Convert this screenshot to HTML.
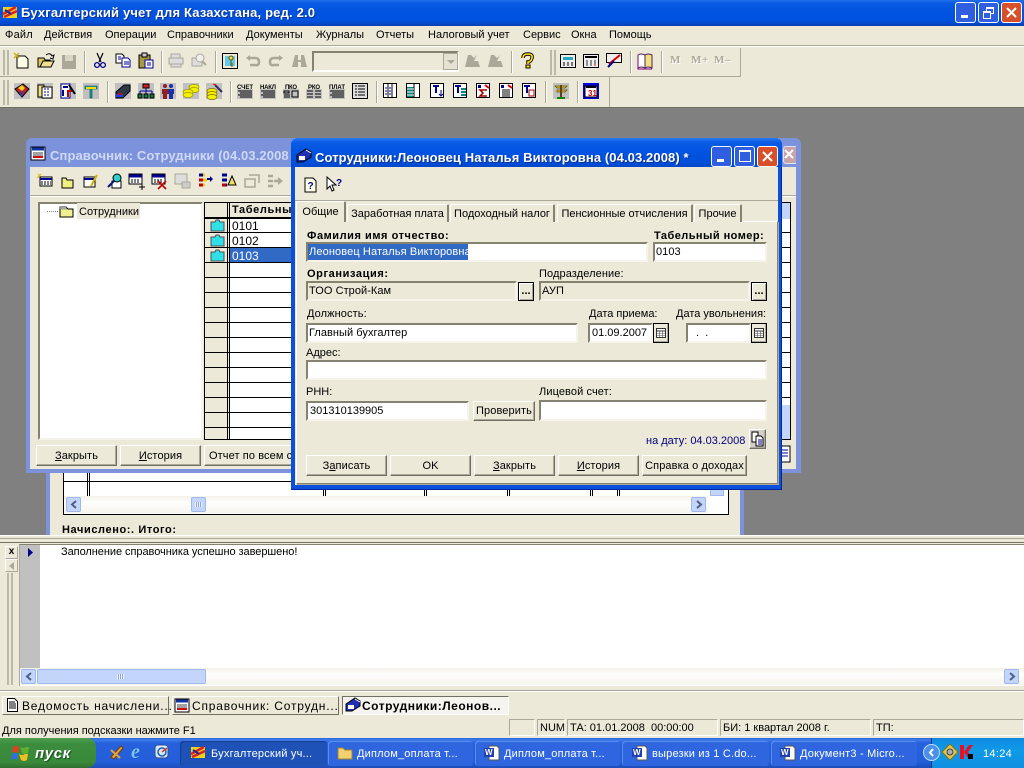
<!DOCTYPE html>
<html><head><meta charset="utf-8"><title>Бухгалтерский учет</title>
<style>
html,body{margin:0;padding:0;width:1024px;height:768px;overflow:hidden;background:#ece9d8}
body{position:relative;font:11px "Liberation Sans",sans-serif;color:#000}
div,span,svg{position:absolute;box-sizing:border-box;white-space:nowrap}
svg{overflow:visible}
.t{line-height:14px;height:14px}
.b{font-weight:bold;letter-spacing:.6px}
.inp{background:#fff;border:2px solid;border-color:#85826f #f5f3ea #f5f3ea #85826f;line-height:17px;padding-left:1px;font-size:11px;letter-spacing:.05px}
.dis{background:#ece9d8}
.btn{background:#ece9d8;border:1px solid;border-color:#fff #716f64 #716f64 #fff;box-shadow:inset -1px -1px 0 #aca899;text-align:center;line-height:20px;font-size:11px;letter-spacing:.1px}
.dots{background:#ece9d8;border:1px solid #000;box-shadow:inset 1px 1px 0 #fff,inset -1px -1px 0 #aca899;text-align:center;font-weight:bold;line-height:16px;font-size:11px}
.sep{width:2px;background:#aca899;border-right:1px solid #fff}
.tab{background:#ece9d8;border:1px solid #aca899;border-bottom:none;border-top-color:#fff;border-left-color:#fff;border-right:2px solid #85826f;text-align:center;line-height:20px;font-size:11px;border-radius:2px 2px 0 0}
.tb{background:#2f66e0;border-radius:3px;color:#fff;line-height:26px;padding-left:29px;font-size:11px;letter-spacing:.2px;top:741px;height:25px;box-shadow:inset 1px 1px 0 #5a8cf0}
.st{top:719px;height:17px;border:1px solid;border-color:#aca899 #fff #fff #aca899;line-height:16px;padding-left:2px;font-size:11px;letter-spacing:0}
.mdi{top:696px;height:19px;border:1px solid;border-color:#fff #716f64 #716f64 #fff;background:#ece9d8;line-height:19px;font-size:12px;letter-spacing:.8px;padding-left:19px}
.m{top:28px}
.ic{width:16px;height:16px}
</style></head><body>

<!-- desktop -->
<div style="left:0;top:107px;width:1024px;height:429px;background:#808080;border-top:1px solid #716f64"></div>

<!-- main title -->
<div style="left:0;top:0;width:1024px;height:26px;background:linear-gradient(#1f70ea 0,#0a5ce4 3px,#0053e0 12px,#0053e0 20px,#0248c8 24px,#003ea8 26px)"></div>
<svg style="left:2px;top:5px" width="17" height="16"><rect x="1" y="2" width="14" height="11" fill="#f0d020"/><path d="M1 9L14 2M2 12L15 6" stroke="#e02020" stroke-width="2.5"/><path d="M3 5l6 4" stroke="#1030a0" stroke-width="2"/></svg>
<div style="left:21px;top:5px;height:16px;line-height:16px;color:#fff;font-weight:bold;font-size:13px;letter-spacing:.17px;text-shadow:1px 1px 0 #0f2f90">Бухгалтерский учет для Казахстана, ред. 2.0</div>
<div style="left:955px;top:2px;width:21px;height:21px;border:1px solid #fff;border-radius:3px;background:#2f5fe0"><span style="left:5px;top:12px;width:7px;height:3px;background:#fff"></span></div>
<div style="left:978px;top:2px;width:21px;height:21px;border:1px solid #fff;border-radius:3px;background:#2f5fe0"><span style="left:7px;top:4px;width:8px;height:7px;border:1px solid #fff;border-top-width:2px"></span><span style="left:4px;top:8px;width:8px;height:8px;border:1px solid #fff;border-top-width:2px;background:#2f5fe0"></span></div>
<div style="left:1001px;top:2px;width:21px;height:21px;border:1px solid #fff;border-radius:3px;background:#d8502a"><svg style="left:4px;top:4px" width="11" height="11"><path d="M1 1l9 9M10 1l-9 9" stroke="#fff" stroke-width="2"/></svg></div>

<!-- menu -->
<div class="t m" style="left:5px;letter-spacing:.2px">Файл</div>
<div class="t m" style="left:44px">Действия</div>
<div class="t m" style="left:105px">Операции</div>
<div class="t m" style="left:167px">Справочники</div>
<div class="t m" style="left:246px">Документы</div>
<div class="t m" style="left:316px">Журналы</div>
<div class="t m" style="left:376px">Отчеты</div>
<div class="t m" style="left:428px">Налоговый учет</div>
<div class="t m" style="left:523px">Сервис</div>
<div class="t m" style="left:571px">Окна</div>
<div class="t m" style="left:609px">Помощь</div>

<div style="left:0;top:45px;width:1024px;height:2px;background:#aca899;border-bottom:1px solid #fff"></div>
<div style="left:0;top:76px;width:741px;height:1px;background:#aca899"></div>
<div style="left:740px;top:48px;width:1px;height:29px;background:#aca899"></div>
<div style="left:609px;top:77px;width:1px;height:30px;background:#aca899"></div>
<div style="left:3px;top:50px;width:6px;height:25px;border-left:2px solid #bbb8a8;border-right:2px solid #bbb8a8"></div>
<div style="left:3px;top:80px;width:6px;height:25px;border-left:2px solid #bbb8a8;border-right:2px solid #bbb8a8"></div>
<div style="left:550px;top:50px;width:6px;height:25px;border-left:2px solid #bbb8a8;border-right:2px solid #bbb8a8"></div>

<!-- toolbar 1 separators -->
<div class="sep" style="left:84px;top:51px;height:22px"></div>
<div class="sep" style="left:161px;top:51px;height:22px"></div>
<div class="sep" style="left:215px;top:51px;height:22px"></div>
<div class="sep" style="left:511px;top:51px;height:22px"></div>
<div class="sep" style="left:630px;top:51px;height:22px"></div>
<div class="sep" style="left:661px;top:51px;height:22px"></div>
<div class="sep" style="left:107px;top:81px;height:22px"></div>
<div class="sep" style="left:230px;top:81px;height:22px"></div>
<div class="sep" style="left:376px;top:81px;height:22px"></div>
<div class="sep" style="left:545px;top:81px;height:22px"></div>
<div class="sep" style="left:577px;top:81px;height:22px"></div>

<!-- toolbar 1 icons -->
<svg style="left:13px;top:52px" width="18" height="18"><path d="M4 4h8l3 3v9H4z" fill="#ffffe8" stroke="#000"/><path d="M1 1l5 5M6 1L1 6" stroke="#c8b020" stroke-width="1.5"/></svg>
<svg style="left:37px;top:52px" width="18" height="18"><path d="M1 6h6l1 2h5v7H1z" fill="#e0c860" stroke="#000"/><path d="M3 15l3-6h11l-3 6z" fill="#f0e090" stroke="#000"/><path d="M9 3q4-3 6 1l2-1-1 4-3-1" fill="none" stroke="#000"/></svg>
<svg style="left:61px;top:54px" width="16" height="15"><rect x="1" y="1" width="14" height="14" fill="#aca899"/><rect x="4" y="1" width="8" height="6" fill="#d8d5c5"/></svg>
<svg style="left:94px;top:53px" width="12" height="16"><path d="M3 0l4 9M9 0L5 9" stroke="#000" stroke-width="1.2"/><circle cx="3" cy="12" r="2.4" fill="none" stroke="#000090" stroke-width="1.3"/><circle cx="9" cy="12" r="2.4" fill="none" stroke="#000090" stroke-width="1.3"/></svg>
<svg style="left:115px;top:53px" width="16" height="15"><path d="M1 1h6l2 2v7H1z" fill="#fff" stroke="#000"/><path d="M7 5h6l2 2v7H7z" fill="#fff" stroke="#000090"/><path d="M9 9h5M9 11h5M3 4h3M3 6h3" stroke="#000090"/></svg>
<svg style="left:138px;top:53px" width="16" height="16"><rect x="1" y="2" width="11" height="13" fill="#a89a40" stroke="#000"/><rect x="4" y="0" width="5" height="4" fill="#ccc" stroke="#000"/><rect x="7" y="7" width="8" height="8" fill="#fff" stroke="#000090"/><path d="M9 10h4M9 12h4" stroke="#000090"/></svg>
<svg style="left:168px;top:53px" width="16" height="15"><path d="M3 1h9v4H3zM1 5h14v6H1zM3 11h10v3H3z" fill="#ddd" stroke="#aca899"/></svg>
<svg style="left:191px;top:53px" width="16" height="15"><path d="M1 5h10v8H1z" fill="#ddd" stroke="#aca899"/><circle cx="9" cy="5" r="4" fill="#eee" stroke="#aca899"/><path d="M11 8l4 4" stroke="#aca899" stroke-width="2"/></svg>
<svg style="left:222px;top:53px" width="16" height="16"><rect x=".5" y=".5" width="15" height="15" fill="#ece9d8" stroke="#000"/><rect x="3" y="3" width="10" height="10" fill="#60c8e8"/><circle cx="9" cy="5" r="2" fill="#f0e040" stroke="#705000"/><path d="M9 7v6M9 11h2M9 13h2" stroke="#705000"/></svg>
<svg style="left:246px;top:55px" width="14" height="11"><path d="M2 3h7q4 0 4 4t-4 3H4" fill="none" stroke="#aca899" stroke-width="2.5"/><path d="M0 3l4-3v6z" fill="#aca899"/></svg>
<svg style="left:269px;top:55px" width="14" height="11"><path d="M12 3H5q-4 0-4 4t4 3h5" fill="none" stroke="#aca899" stroke-width="2.5"/><path d="M14 3l-4-3v6z" fill="#aca899"/></svg>
<svg style="left:292px;top:54px" width="15" height="14"><path d="M3 1h3v5h3V1h3l3 12H9V8H6v5H0z" fill="#aca899"/></svg>
<div style="left:312px;top:51px;width:147px;height:21px;background:#ece9d8;border:2px solid;border-color:#85826f #fff #fff #85826f"></div>
<div style="left:443px;top:53px;width:15px;height:17px;background:#e5e2d2;border:1px solid #aca899"><svg style="left:3px;top:6px" width="8" height="5"><path d="M0 0h8L4 4z" fill="#aca899"/></svg></div>
<svg style="left:465px;top:54px" width="15" height="14"><path d="M3 1h3l3 3 3-3-3 6v6H0z" fill="#aca899"/><path d="M9 7h4l2 6H9z" fill="#aca899"/></svg>
<svg style="left:488px;top:54px" width="15" height="14"><path d="M3 1h3l3 3 3-3-3 6v6H0z" fill="#aca899"/><path d="M9 7h4l2 6H9z" fill="#aca899"/></svg>
<svg style="left:521px;top:53px" width="13" height="16"><path d="M2 5q0-4 5-4t4 4-4 4v2" fill="none" stroke="#000" stroke-width="3.4"/><path d="M2 5q0-4 5-4t4 4-4 4v2" fill="none" stroke="#ffe000" stroke-width="1.6"/><rect x="5" y="12" width="4" height="3" fill="#ffe000" stroke="#000"/></svg>
<svg style="left:560px;top:54px" width="16" height="15"><rect x=".5" y=".5" width="15" height="13" fill="#eee" stroke="#000"/><rect x="3" y="3" width="10" height="3" fill="#20a8c0"/><path d="M3 9h2M7 9h2M11 9h2M3 11h2M7 11h2M11 11h2" stroke="#000"/></svg>
<svg style="left:583px;top:54px" width="16" height="15"><rect x=".5" y=".5" width="15" height="13" fill="#eee" stroke="#000"/><path d="M2 3h12" stroke="#000" stroke-width="2"/><path d="M3 7h2M7 7h2M11 7h2M3 9h2M7 9h2M11 9h2M3 11h2M7 11h2" stroke="#333"/><path d="M11 11h2" stroke="#e00"/></svg>
<svg style="left:606px;top:53px" width="17" height="16"><rect x=".5" y=".5" width="15" height="9" fill="#eee" stroke="#000"/><path d="M3 11L14 2" stroke="#d00" stroke-width="2"/><path d="M2 14l6-6" stroke="#000090" stroke-width="2"/></svg>
<svg style="left:637px;top:52px" width="17" height="17"><path d="M1 3q3-2 7 0v13q-4-2-7 0z" fill="#fff" stroke="#502060"/><path d="M8 3q3-2 7 0v13q-4-2-7 0z" fill="#f0e080" stroke="#502060"/><path d="M1 6v11h14" fill="none" stroke="#800080"/></svg>
<div class="t b" style="left:670px;top:54px;font:bold 11px 'Liberation Serif',serif;color:#aca899;text-shadow:1px 1px 0 #fff">M</div>
<div class="t b" style="left:691px;top:54px;font:bold 11px 'Liberation Serif',serif;color:#aca899;text-shadow:1px 1px 0 #fff">M+</div>
<div class="t b" style="left:714px;top:54px;font:bold 11px 'Liberation Serif',serif;color:#aca899;text-shadow:1px 1px 0 #fff">M–</div>

<!-- toolbar 2 icons -->
<svg style="left:14px;top:83px" width="16" height="16"><rect width="16" height="16" fill="#c0c0c0"/><path d="M1 6l8-5 6 5-7 8z" fill="#c02020" stroke="#000"/><path d="M4 5l4 3 3-3-3-3z" fill="#f0d020"/><path d="M8 8l-1 5" stroke="#2040c0" stroke-width="2"/></svg>
<svg style="left:37px;top:83px" width="16" height="16"><rect width="16" height="16" fill="#c0c0c0"/><path d="M1 2h6v12H1z" fill="#f0e080" stroke="#000"/><rect x="5" y="4" width="10" height="11" fill="#fff" stroke="#000"/><path d="M7 6h6M7 9h6M7 12h6" stroke="#000090" stroke-dasharray="2 1"/></svg>
<svg style="left:60px;top:83px" width="16" height="16"><rect width="16" height="16" fill="#c0c0c0"/><rect x="1" y="1" width="9" height="14" fill="#fff" stroke="#000090"/><path d="M3 4h5M3 7v6" stroke="#000090" stroke-width="2"/><path d="M8 14V8h4" stroke="#c00000" stroke-width="2" fill="none"/><path d="M9 2l6 9" stroke="#000" stroke-width="2"/></svg>
<svg style="left:83px;top:83px" width="16" height="16"><rect width="16" height="16" fill="#c0c0c0"/><path d="M2 3h12v3H9v9H7V6H2z" fill="#20a0a0" stroke="#004040" stroke-width=".6"/><path d="M3 5h10" stroke="#f0e000" stroke-width="2"/></svg>
<svg style="left:114px;top:83px" width="18" height="16"><rect x="1" width="16" height="16" fill="#c0c0c0"/><path d="M2 9l8-7h6v6l-7 7H2z" fill="#303848" stroke="#000"/><path d="M2 11h7v3H2z" fill="#2040e0"/><path d="M4 11h4" stroke="#e00" stroke-width="1.5"/></svg>
<svg style="left:137px;top:83px" width="18" height="16"><rect x="1" width="16" height="16" fill="#c0c0c0"/><rect x="6" y="1" width="6" height="4" fill="#d02020" stroke="#000"/><path d="M9 5v3M3 8h12M3 8v3M9 8v3M15 8v3" stroke="#000090"/><path d="M1 11h4v4H1zM7 11h4v4H7zM13 11h4v4h-4z" fill="#108040" stroke="#000"/></svg>
<svg style="left:160px;top:83px" width="16" height="16"><rect width="16" height="16" fill="#c0c0c0"/><circle cx="5" cy="3" r="2" fill="#902020"/><path d="M2 6h6v5H7v5H3v-5H2z" fill="#902020"/><circle cx="11" cy="3" r="2" fill="#2030a0"/><path d="M8 6h6v5h-1v5H9v-5H8z" fill="#2030a0"/></svg>
<svg style="left:183px;top:83px" width="16" height="16"><rect width="16" height="16" fill="#c0c0c0"/><ellipse cx="11" cy="4" rx="5" ry="2.5" fill="#f0f000" stroke="#a09000" stroke-width=".7"/><ellipse cx="11" cy="7" rx="5" ry="2.5" fill="#f0f000" stroke="#a09000" stroke-width=".7"/><ellipse cx="5" cy="9" rx="5" ry="2.5" fill="#f0f000" stroke="#a09000" stroke-width=".7"/><ellipse cx="5" cy="12" rx="5" ry="2.5" fill="#f0f000" stroke="#a09000" stroke-width=".7"/></svg>
<svg style="left:206px;top:83px" width="17" height="16"><rect width="16" height="16" fill="#c0c0c0"/><ellipse cx="6" cy="8" rx="5" ry="2.5" fill="#f0f000" stroke="#806000" stroke-width=".7"/><ellipse cx="6" cy="11" rx="5" ry="2.5" fill="#f0f000" stroke="#806000" stroke-width=".7"/><ellipse cx="6" cy="14" rx="5" ry="2.5" fill="#f0f000" stroke="#806000" stroke-width=".7"/><path d="M9 2l7 7" stroke="#303060" stroke-width="2"/><path d="M7 1l3 1" stroke="#e00"/></svg>
<svg style="left:237px;top:83px" width="16" height="16"><rect y="6" width="16" height="10" fill="#c0c0c0"/><text x="0" y="6" font-family="Liberation Sans" font-size="6" font-weight="bold" textLength="16">СЧЕТ</text><path d="M1 8h14M3 10h12M1 12h14M3 14h12" stroke="#000"/></svg>
<svg style="left:260px;top:83px" width="16" height="16"><rect y="6" width="16" height="10" fill="#c0c0c0"/><text x="0" y="6" font-family="Liberation Sans" font-size="6" font-weight="bold" textLength="16">НАКЛ</text><path d="M1 8h14M3 10h12M1 12h14M3 14h12" stroke="#000"/></svg>
<svg style="left:283px;top:83px" width="16" height="16"><rect y="6" width="16" height="10" fill="#c0c0c0"/><text x="2" y="6" font-family="Liberation Sans" font-size="6" font-weight="bold" textLength="12">ПКО</text><path d="M1 8h5v2H1zM1 12h6M1 14h6M9 8h6v6H9z" fill="none" stroke="#000"/></svg>
<svg style="left:306px;top:83px" width="16" height="16"><rect y="6" width="16" height="10" fill="#c0c0c0"/><text x="2" y="6" font-family="Liberation Sans" font-size="6" font-weight="bold" textLength="12">РКО</text><path d="M1 8h6M9 8h6M1 11h6M9 11h6M1 14h6M9 14h6" stroke="#000"/></svg>
<svg style="left:329px;top:83px" width="16" height="16"><rect y="6" width="16" height="10" fill="#c0c0c0"/><text x="0" y="6" font-family="Liberation Sans" font-size="6" font-weight="bold" textLength="16">ПЛАТ</text><path d="M1 8h14M3 10h12M1 12h14M3 14h12" stroke="#000"/></svg>
<svg style="left:352px;top:83px" width="16" height="16"><rect x=".5" y=".5" width="15" height="15" fill="#ddd" stroke="#000"/><path d="M3 3h2M6 3h7M3 6h2M6 6h7M3 9h2M6 9h7M3 12h2M6 12h7" stroke="#000"/></svg>
<svg style="left:383px;top:83px" width="15" height="16"><rect x=".5" y=".5" width="13" height="14" fill="#fff" stroke="#000"/><path d="M5 1v14M9 1v14" stroke="#000"/><path d="M2 5h2M2 8h2M2 11h2M6 5h2M6 8h2M6 11h2" stroke="#000090"/></svg>
<svg style="left:406px;top:83px" width="15" height="16"><rect x=".5" y=".5" width="13" height="14" fill="#fff" stroke="#000"/><rect x="1" y="4" width="7" height="10" fill="#108080"/><path d="M8 1v14" stroke="#000"/><path d="M1 6h7M1 9h7M1 12h7" stroke="#fff"/></svg>
<svg style="left:430px;top:83px" width="15" height="16"><rect x=".5" y=".5" width="13" height="14" fill="#fff" stroke="#000"/><path d="M3 3h6M6 3v7" stroke="#000090" stroke-width="2"/><path d="M11 7v6M9 11l2 2 2-2" stroke="#000090" fill="none"/></svg>
<svg style="left:453px;top:83px" width="15" height="16"><rect x=".5" y=".5" width="13" height="14" fill="#fff" stroke="#000"/><path d="M2 3h6M5 3v7" stroke="#000090" stroke-width="2"/><path d="M8 6h5M8 9h5M8 12h5" stroke="#108080" stroke-width="2"/></svg>
<svg style="left:476px;top:83px" width="15" height="16"><rect x=".5" y=".5" width="13" height="14" fill="#fff" stroke="#000"/><path d="M2 2h3v3H2z" fill="#000090"/><path d="M9 2l4 3" stroke="#d00" stroke-width="2"/><path d="M11 7H4l3 3-3 3h7" fill="none" stroke="#a00000" stroke-width="1.5"/></svg>
<svg style="left:499px;top:83px" width="15" height="16"><rect x=".5" y=".5" width="13" height="14" fill="#fff" stroke="#000"/><path d="M2 2h3v3H2z" fill="#000090"/><path d="M9 2l4 3" stroke="#d00" stroke-width="2"/><path d="M3 7h8M3 9h8M3 11h8M3 13h8" stroke="#000"/></svg>
<svg style="left:522px;top:83px" width="15" height="16"><rect x=".5" y=".5" width="13" height="14" fill="#fff" stroke="#000"/><path d="M2 3h6M5 3v7" stroke="#000090" stroke-width="2"/><rect x="7" y="7" width="5" height="6" fill="none" stroke="#a00000"/></svg>
<svg style="left:553px;top:83px" width="16" height="16"><rect width="16" height="16" fill="#c0c0c0"/><path d="M2 3h12l-2 2H4z" fill="#e0c020" stroke="#605000" stroke-width=".7"/><path d="M4 7h10l-2 2H4z" fill="#e0c020" stroke="#605000" stroke-width=".7"/><path d="M8 2v12" stroke="#604020" stroke-width="2"/><path d="M4 15h8" stroke="#108010" stroke-width="2"/></svg>
<svg style="left:583px;top:83px" width="16" height="16"><rect width="16" height="16" fill="#0000e0"/><rect x="2" y="3" width="12" height="11" fill="#fff" stroke="#000"/><path d="M3 4h10" stroke="#000" stroke-width="2"/><text x="5" y="13" font-family="Liberation Sans" font-size="8" font-weight="bold" fill="#d00000">31</text></svg>

<!-- Back window (Vedomost) -->
<div style="left:46px;top:465px;width:698px;height:72px;background:#ece9d8;border-left:4px solid #7c93dc;border-right:4px solid #7c93dc"></div>
<div style="left:63px;top:470px;width:666px;height:45px;background:#fff;border:1px solid #000;border-top:none"></div>
<div style="left:64px;top:481px;width:644px;height:1px;background:#000"></div>
<div style="left:87px;top:470px;width:3px;height:26px;border-left:1px solid #000;border-right:1px solid #000"></div>
<div style="left:323px;top:470px;width:3px;height:26px;border-left:1px solid #000;border-right:1px solid #000"></div>
<div style="left:424px;top:470px;width:3px;height:26px;border-left:1px solid #000;border-right:1px solid #000"></div>
<div style="left:507px;top:470px;width:3px;height:26px;border-left:1px solid #000;border-right:1px solid #000"></div>
<div style="left:590px;top:470px;width:3px;height:26px;border-left:1px solid #000;border-right:1px solid #000"></div>
<div style="left:617px;top:470px;width:3px;height:26px;border-left:1px solid #000;border-right:1px solid #000"></div>
<div style="left:64px;top:496px;width:644px;height:17px;background:linear-gradient(#f3f2ea,#fefefe 40%,#f5f4ec)"></div>
<div style="left:66px;top:497px;width:15px;height:15px;background:#c3d5fb;border:1px solid #a0b8ea;border-radius:2px"><svg style="left:3px;top:2px" width="8" height="9"><path d="M6 1L2 4.5 6 8" fill="none" stroke="#4d6185" stroke-width="2"/></svg></div>
<div style="left:191px;top:497px;width:15px;height:15px;background:#c3d5fb;border:1px solid #a0b8ea;border-radius:2px"><span style="left:3px;top:4px;width:7px;height:5px;background:repeating-linear-gradient(90deg,#eef3fd 0,#eef3fd 1px,#8ca6d8 1px,#8ca6d8 2px)"></span></div>
<div style="left:691px;top:497px;width:15px;height:15px;background:#c3d5fb;border:1px solid #a0b8ea;border-radius:2px"><svg style="left:3px;top:2px" width="8" height="9"><path d="M2 1l4 3.5L2 8" fill="none" stroke="#4d6185" stroke-width="2"/></svg></div>
<div style="left:710px;top:470px;width:14px;height:26px;background:#c3d5fb;border:1px solid #a0b8ea"></div>
<div class="t b" style="left:62px;top:523px">Начислено:. Итого:</div>

<!-- Window 1 -->
<div style="left:26px;top:138px;width:775px;height:335px;background:#7c93dc;border-radius:6px 6px 0 0"></div>
<div style="left:30px;top:167px;width:766px;height:302px;background:#ece9d8"></div>
<svg style="left:30px;top:146px" width="17" height="16"><rect x="1" y="1" width="14" height="13" fill="#fff" stroke="#000"/><path d="M2 3h12" stroke="#1030a0" stroke-width="3"/><path d="M3 7h10M3 9h10" stroke="#444"/><path d="M3 11h10" stroke="#d01010" stroke-width="2"/></svg>
<div style="left:50px;top:148px;height:16px;line-height:16px;color:#cfd8f4;font-weight:bold;font-size:13px;letter-spacing:.1px">Справочник: Сотрудники (04.03.2008</div>
<div style="left:783px;top:146px;width:13px;height:18px;background:#c8a4a8;border:1px solid #dfe5f8;border-right:none;border-radius:3px 0 0 3px"></div>
<svg style="left:784px;top:150px" width="10" height="10"><path d="M1 0l8 8M9 0L1 8" stroke="#fff" stroke-width="2"/></svg>

<svg style="left:37px;top:174px" width="16" height="14"><path d="M1 0l4 4M4 0L0 4" stroke="#d0c000"/><rect x="3" y="3" width="12" height="9" fill="#fff" stroke="#000"/><path d="M3 5h12" stroke="#000090" stroke-width="2"/><path d="M4 8h10M4 10h10" stroke="#000" stroke-dasharray="2 1"/></svg>
<svg style="left:60px;top:175px" width="16" height="14"><path d="M2 3h4l1 2h6v8H2z" fill="#f0f080" stroke="#000"/></svg>
<svg style="left:83px;top:174px" width="16" height="15"><rect x="1" y="3" width="11" height="10" fill="#fff" stroke="#000"/><path d="M1 5h11" stroke="#000090" stroke-width="2"/><path d="M8 12L14 1" stroke="#d0b000" stroke-width="2"/></svg>
<svg style="left:107px;top:173px" width="16" height="16"><rect x="5" y="8" width="9" height="7" fill="#fff" stroke="#000"/><circle cx="10" cy="5" r="4" fill="#30d0d0" stroke="#000"/><path d="M7 8l-6 6" stroke="#101080" stroke-width="2"/></svg>
<svg style="left:129px;top:173px" width="16" height="17"><rect x="0" y="1" width="13" height="10" fill="#fff" stroke="#000"/><path d="M0 3h13" stroke="#000090" stroke-width="3"/><path d="M2 7h9M2 9h9" stroke="#000" stroke-dasharray="2 1"/><path d="M10 14h6M13 11v6" stroke="#000"/></svg>
<svg style="left:152px;top:173px" width="16" height="17"><rect x="0" y="1" width="13" height="10" fill="#fff" stroke="#000"/><path d="M0 3h13" stroke="#000090" stroke-width="3"/><path d="M2 7h9M2 9h9" stroke="#000" stroke-dasharray="2 1"/><path d="M6 8l8 8M14 8l-8 8" stroke="#c00000" stroke-width="1.6"/></svg>
<svg style="left:175px;top:173px" width="16" height="17"><rect x="0" y="1" width="12" height="10" fill="#ddd" stroke="#aca899"/><rect x="7" y="9" width="8" height="6" fill="#ccc" stroke="#aca899"/></svg>
<svg style="left:198px;top:173px" width="16" height="16"><path d="M1 2h6M1 7h8M1 12h6" stroke="#f0d000" stroke-width="3"/><path d="M1 7h4M1 12h4" stroke="#c00000" stroke-width="3"/><path d="M1 2h4" stroke="#000090" stroke-width="3"/><path d="M9 5h3V3l3 3-3 3V7H9z" fill="#000090"/></svg>
<svg style="left:221px;top:173px" width="16" height="16"><path d="M1 2h5M1 7h5M1 12h5" stroke="#000090" stroke-width="3"/><path d="M1 12h4" stroke="#c00000" stroke-width="3"/><path d="M11 3l4 9H7z" fill="#f0e060" stroke="#000"/></svg>
<svg style="left:244px;top:174px" width="16" height="14"><path d="M1 5h10v8H1zM5 1h10v8" fill="none" stroke="#aca899" stroke-width="1.5"/></svg>
<svg style="left:267px;top:174px" width="16" height="14"><path d="M1 2h5M1 7h5M1 12h5M7 7h7" stroke="#aca899" stroke-width="2.5"/><path d="M11 3l5 4-5 4z" fill="#aca899"/></svg>

<div style="left:30px;top:195px;width:766px;height:2px;background:#aca899;border-bottom:1px solid #fff"></div>
<!-- tree -->
<div style="left:38px;top:202px;width:165px;height:238px;background:#fff;border:2px solid;border-color:#85826f #f5f3ea #f5f3ea #85826f"></div>
<div style="left:47px;top:211px;width:11px;border-top:1px dotted #808080"></div>
<svg style="left:58px;top:204px" width="17" height="15"><path d="M2 3h6l2 2h5v8H2z" fill="#f0f090" stroke="#000"/><path d="M2 3h6l1 2H2z" fill="#bbb" stroke="#555" stroke-width=".5"/></svg>
<div style="left:77px;top:203px;height:16px;width:63px;background:#ece9d8"></div>
<div class="t" style="left:79px;top:205px;letter-spacing:.05px">Сотрудники</div>
<!-- grid -->
<div style="left:204px;top:202px;width:587px;height:238px;background:#fff;border:1px solid #000"></div>
<div style="left:205px;top:203px;width:24px;height:236px;background:#ece9d8"></div>
<div style="left:227px;top:203px;width:3px;height:236px;border-left:1px solid #000;border-right:1px solid #000"></div>
<div style="left:230px;top:203px;width:560px;height:14px;background:#ece9d8"></div>
<div class="t b" style="left:232px;top:203px">Табельный</div>
<div style="left:205px;top:217px;width:585px;height:2px;background:#000"></div>
<div style="left:230px;top:248px;width:70px;height:15px;background:#316ac5"></div>
<div class="t" style="left:232px;top:219px;font-size:12px">0101</div>
<div class="t" style="left:232px;top:234px;font-size:12px">0102</div>
<div class="t" style="left:232px;top:249px;font-size:12px;color:#fff">0103</div>
<div style="left:205px;top:232px;width:585px;height:1px;background:#000"></div>
<div style="left:205px;top:247px;width:585px;height:1px;background:#000"></div>
<div style="left:205px;top:262px;width:585px;height:1px;background:#000"></div>
<div style="left:205px;top:277px;width:585px;height:1px;background:#000"></div>
<div style="left:205px;top:292px;width:585px;height:1px;background:#000"></div>
<div style="left:205px;top:307px;width:585px;height:1px;background:#000"></div>
<div style="left:205px;top:322px;width:585px;height:1px;background:#000"></div>
<div style="left:205px;top:337px;width:585px;height:1px;background:#000"></div>
<div style="left:205px;top:352px;width:585px;height:1px;background:#000"></div>
<div style="left:205px;top:367px;width:585px;height:1px;background:#000"></div>
<div style="left:205px;top:382px;width:585px;height:1px;background:#000"></div>
<div style="left:205px;top:397px;width:585px;height:1px;background:#000"></div>
<div style="left:205px;top:412px;width:585px;height:1px;background:#000"></div>
<div style="left:205px;top:427px;width:585px;height:1px;background:#000"></div>
<svg style="left:210px;top:219px" width="15" height="13"><path d="M1 3h4l1-2h3l1 2h4v9H1z" fill="#30e0e8" stroke="#505050"/></svg>
<svg style="left:210px;top:234px" width="15" height="13"><path d="M1 3h4l1-2h3l1 2h4v9H1z" fill="#30e0e8" stroke="#505050"/></svg>
<svg style="left:210px;top:249px" width="15" height="13"><path d="M1 3h4l1-2h3l1 2h4v9H1z" fill="#30e0e8" stroke="#505050"/></svg>
<div style="left:782px;top:203px;width:8px;height:16px;background:#c3d5fb"></div>
<div style="left:782px;top:405px;width:8px;height:34px;background:#c3d5fb"></div>
<div class="btn" style="left:36px;top:445px;width:81px;height:21px"><u>З</u>акрыть</div>
<div class="btn" style="left:120px;top:445px;width:81px;height:21px"><u>И</u>стория</div>
<div class="btn" style="left:204px;top:445px;width:90px;height:21px;text-align:left;padding-left:4px">Отчет по всем сотрудникам</div>
<svg style="left:780px;top:444px" width="12" height="20"><rect x="0" y="2" width="10" height="16" fill="#fff" stroke="#000"/><path d="M2 6h6M2 9h6M2 12h6" stroke="#000090"/></svg>

<!-- Dialog -->
<div style="left:291px;top:138px;width:491px;height:352px;background:#0a50dc;border-radius:7px 7px 0 0;box-shadow:inset -1px -1px 0 #002a9c"></div>
<div style="left:291px;top:138px;width:491px;height:29px;background:linear-gradient(#2a7bf2 0,#0b5ce6 4px,#0053e0 14px,#0050dc 24px,#0248c8 29px);border-radius:7px 7px 0 0"></div>
<div style="left:295px;top:167px;width:483px;height:318px;background:#ece9d8"></div>
<svg style="left:296px;top:148px" width="17" height="15"><path d="M1 7l9-6 5 3v5l-8 5H1z" fill="#2030b0" stroke="#000"/><path d="M3 8h6v4H3z" fill="#fff"/><path d="M10 2l5 3" stroke="#fff"/></svg>
<div style="left:315px;top:150px;height:16px;line-height:16px;color:#fff;font-weight:bold;font-size:13px;letter-spacing:.1px;text-shadow:1px 1px 0 #0f2f90">Сотрудники:Леоновец Наталья Викторовна (04.03.2008) *</div>
<div style="left:711px;top:146px;width:21px;height:21px;border:1px solid #fff;border-radius:3px;background:#2f5fe0"><span style="left:5px;top:12px;width:7px;height:3px;background:#fff"></span></div>
<div style="left:734px;top:146px;width:21px;height:21px;border:1px solid #fff;border-radius:3px;background:#2f5fe0"><span style="left:4px;top:3px;width:12px;height:12px;border:1px solid #fff;border-top-width:2px"></span></div>
<div style="left:757px;top:146px;width:21px;height:21px;border:1px solid #fff;border-radius:3px;background:#d8502a"><svg style="left:4px;top:4px" width="11" height="11"><path d="M1 1l9 9M10 1l-9 9" stroke="#fff" stroke-width="2"/></svg></div>

<svg style="left:304px;top:177px" width="13" height="16"><path d="M1 1h8l3 3v11H1z" fill="#ffffe8" stroke="#000"/><text x="3.500" y="12" font-family="Liberation Sans" font-size="10" font-weight="bold" fill="#000090">?</text></svg>
<svg style="left:326px;top:177px" width="17" height="16"><path d="M1 0v12l3-3 2 5 2-1-2-5h4z" fill="#fff" stroke="#000"/><text x="10" y="9" font-family="Liberation Sans" font-size="10" font-weight="bold" fill="#000090">?</text></svg>

<div style="left:295px;top:200px;width:483px;height:1px;background:#aca899"></div>
<!-- tabs -->
<div style="left:296px;top:221px;width:482px;height:263px;border:1px solid;border-color:#fff #85826f #85826f #fff;box-shadow:1px 1px 0 #aca899"></div>
<div class="tab" style="left:296px;top:201px;width:50px;height:21px;z-index:2;border-bottom:none;background:#ece9d8">Общие</div>
<div class="tab" style="left:347px;top:204px;width:102px;height:18px;line-height:18px">Заработная плата</div>
<div class="tab" style="left:450px;top:204px;width:105px;height:18px;line-height:18px">Подоходный налог</div>
<div class="tab" style="left:557px;top:204px;width:136px;height:18px;line-height:18px">Пенсионные отчисления</div>
<div class="tab" style="left:694px;top:204px;width:48px;height:18px;line-height:18px">Прочие</div>

<div class="t b" style="left:307px;top:229px;letter-spacing:.55px">Фамилия имя отчество:</div>
<div class="t b" style="left:654px;top:229px;letter-spacing:.45px">Табельный номер:</div>
<div class="inp" style="left:306px;top:242px;width:342px;height:20px"></div>
<div style="left:308px;top:244px;width:160px;height:16px;background:#316ac5"></div>
<div class="t" style="left:309px;top:245px;color:#fff;letter-spacing:.12px">Леоновец Наталья Викторовна</div>
<div class="inp" style="left:653px;top:242px;width:114px;height:20px">0103</div>

<div class="t b" style="left:307px;top:267px">Организация:</div>
<div class="t" style="left:539px;top:267px;letter-spacing:.1px">Подразделение:</div>
<div class="inp dis" style="left:306px;top:281px;width:211px;height:20px">ТОО Строй-Кам</div>
<div class="dots" style="left:518px;top:282px;width:16px;height:19px">...</div>
<div class="inp dis" style="left:539px;top:281px;width:211px;height:20px">АУП</div>
<div class="dots" style="left:751px;top:282px;width:16px;height:19px">...</div>

<div class="t" style="left:307px;top:307px;letter-spacing:.1px">Должность:</div>
<div class="t" style="left:589px;top:307px">Дата приема:</div>
<div class="t" style="left:676px;top:307px">Дата увольнения:</div>
<div class="inp" style="left:306px;top:323px;width:272px;height:20px">Главный бухгалтер</div>
<div class="inp" style="left:588px;top:323px;width:65px;height:20px;padding-left:2px;letter-spacing:0">01.09.2007</div>
<div class="btn" style="left:653px;top:323px;width:16px;height:20px;border-color:#000"></div>
<svg style="left:656px;top:328px" width="10" height="10"><rect x=".5" y=".5" width="9" height="9" fill="#fff" stroke="#333"/><path d="M1 3h8" stroke="#333"/><path d="M1 5.500h8M1 7.500h8M3.500 3v6M6.500 3v6" stroke="#555" stroke-width=".6"/></svg>
<div class="inp" style="left:686px;top:323px;width:65px;height:20px;padding-left:8px;letter-spacing:1.5px">. .</div>
<div class="btn" style="left:751px;top:323px;width:16px;height:20px;border-color:#000"></div>
<svg style="left:754px;top:328px" width="10" height="10"><rect x=".5" y=".5" width="9" height="9" fill="#fff" stroke="#333"/><path d="M1 3h8" stroke="#333"/><path d="M1 5.500h8M1 7.500h8M3.500 3v6M6.500 3v6" stroke="#555" stroke-width=".6"/></svg>

<div class="t" style="left:306px;top:346px">Адрес:</div>
<div class="inp" style="left:306px;top:360px;width:461px;height:20px"></div>
<div class="t" style="left:306px;top:385px">РНН:</div>
<div class="t" style="left:539px;top:385px;letter-spacing:.1px">Лицевой счет:</div>
<div class="inp" style="left:306px;top:401px;width:163px;height:20px;padding-left:2px;letter-spacing:0">301310139905</div>
<div class="btn" style="left:473px;top:401px;width:62px;height:20px;line-height:19px;border-color:#fff #716f64 #716f64 #fff">Проверить</div>
<div class="inp" style="left:539px;top:400px;width:228px;height:21px"></div>
<div class="t" style="left:646px;top:434px;color:#000080;letter-spacing:0">на дату: 04.03.2008</div>
<div class="btn" style="left:749px;top:429px;width:17px;height:20px;background:#d4d0c8"></div>
<svg style="left:751px;top:431px" width="13" height="16"><path d="M1 1h6v10H1z" fill="#fff" stroke="#000"/><path d="M5 5h5l2 2v8H5z" fill="#fff" stroke="#000"/><path d="M7 9h4M7 11h4M7 13h4" stroke="#000090"/></svg>

<div class="btn" style="left:306px;top:455px;width:81px;height:21px">З<u>а</u>писать</div>
<div class="btn" style="left:390px;top:455px;width:81px;height:21px">OK</div>
<div class="btn" style="left:474px;top:455px;width:81px;height:21px"><u>З</u>акрыть</div>
<div class="btn" style="left:558px;top:455px;width:81px;height:21px"><u>И</u>стория</div>
<div class="btn" style="left:642px;top:455px;width:105px;height:21px">Справка о доходах</div>

<!-- Bottom docked panel -->
<div style="left:0;top:535px;width:1024px;height:3px;background:#ece9d8;border-top:1px solid #fff"></div>
<div style="left:0;top:538px;width:1024px;height:5px;background:#ece9d8;border-top:1px solid #aca899;border-bottom:1px solid #716f64"></div>
<div style="left:0;top:543px;width:1024px;height:152px;background:#ece9d8"></div>
<div style="left:5px;top:546px;width:13px;height:13px;background:#ece9d8;border:1px solid #fff;border-right-color:#aca899;border-bottom-color:#aca899;font:bold 10px/10px 'Liberation Sans',sans-serif;text-align:center">x</div>
<div style="left:5px;top:559px;width:13px;height:13px;background:#ece9d8;border:1px solid #fff;border-right-color:#aca899;border-bottom-color:#aca899"><svg style="left:3px;top:2px" width="6" height="8"><path d="M5 0v8L0 4z" fill="#aca899"/></svg></div>
<div style="left:7px;top:573px;width:6px;height:112px;border-left:2px solid #bbb8a8;border-right:2px solid #bbb8a8"></div>
<div style="left:19px;top:544px;width:1005px;height:142px;background:#fff;border-left:1px solid #aca899;border-top:1px solid #85826f"></div>
<div style="left:20px;top:545px;width:20px;height:124px;background:#c0c0c0"></div>
<svg style="left:28px;top:548px" width="6" height="9"><path d="M0 0l5 4.500L0 9z" fill="#000090"/></svg>
<div class="t" style="left:61px;top:545px;font-size:11px;letter-spacing:-.05px">Заполнение справочника успешно завершено!</div>
<div style="left:20px;top:668px;width:1004px;height:17px;background:linear-gradient(#f3f2ea,#fefefe 40%,#f5f4ec)"></div>
<div style="left:21px;top:669px;width:15px;height:15px;background:#c3d5fb;border:1px solid #a0b8ea;border-radius:2px"><svg style="left:3px;top:2px" width="8" height="9"><path d="M6 1L2 4.500 6 8" fill="none" stroke="#4d6185" stroke-width="2"/></svg></div>
<div style="left:37px;top:669px;width:169px;height:15px;background:#c3d5fb;border:1px solid #a0b8ea;border-radius:2px"><span style="left:79px;top:4px;width:7px;height:5px;background:repeating-linear-gradient(90deg,#eef3fd 0,#eef3fd 1px,#8ca6d8 1px,#8ca6d8 2px)"></span></div>
<div style="left:1004px;top:669px;width:15px;height:15px;background:#c3d5fb;border:1px solid #a0b8ea;border-radius:2px"><svg style="left:3px;top:2px" width="8" height="9"><path d="M2 1l4 3.500L2 8" fill="none" stroke="#4d6185" stroke-width="2"/></svg></div>
<div style="left:0;top:690px;width:1024px;height:2px;background:#aca899;border-bottom:1px solid #fff"></div>

<!-- MDI buttons -->
<div class="mdi" style="left:2px;width:167px">Ведомость начислени...</div>
<svg style="left:7px;top:698px" width="11" height="14"><path d="M.5.5h7l3 3v10H.5z" fill="#fff" stroke="#000"/><path d="M2 4h6M2 6h7M2 8h7M2 10h7" stroke="#000"/></svg>
<div class="mdi" style="left:172px;width:167px">Справочник: Сотрудн...</div>
<svg style="left:174px;top:698px" width="16" height="15"><rect x="1" y="1" width="14" height="13" fill="#fff" stroke="#000"/><path d="M2 3h12" stroke="#1030a0" stroke-width="3"/><path d="M3 7h10M3 9h10" stroke="#444"/><path d="M3 11h10" stroke="#d01010" stroke-width="2"/></svg>
<div class="mdi" style="left:342px;width:167px;border-color:#716f64 #fff #fff #716f64;background:#f5f4ee;font-weight:bold;letter-spacing:.5px">Сотрудники:Леонов...</div>
<svg style="left:345px;top:697px" width="16" height="15"><path d="M1 7l9-6 5 3v5l-8 5H1z" fill="#2030b0" stroke="#000"/><path d="M3 8h6v4H3z" fill="#fff"/><path d="M10 2l5 3" stroke="#fff"/></svg>

<!-- Status -->
<div style="left:0;top:716px;width:1024px;height:22px;background:#ece9d8"></div>
<div class="t" style="left:2px;top:724px;letter-spacing:0">Для получения подсказки нажмите F1</div>
<div class="st" style="left:509px;width:26px"></div>
<div class="st" style="left:537px;width:28px">NUM</div>
<div class="st" style="left:567px;width:151px">ТА: 01.01.2008&nbsp; 00:00:00</div>
<div class="st" style="left:720px;width:151px">БИ: 1 квартал 2008 г.</div>
<div class="st" style="left:873px;width:151px">ТП:</div>

<!-- Taskbar -->
<div style="left:0;top:738px;width:1024px;height:30px;background:linear-gradient(#2a63d8 0,#3c7bea 2px,#2760dc 5px,#245edb 24px,#1d4db8 30px)"></div>
<div style="left:0;top:738px;width:96px;height:30px;background:linear-gradient(#4f9e50,#3c8c3e 20%,#3a8a3c 80%,#2f6f31);border-radius:0 9px 9px 0"></div>
<svg style="left:11px;top:744px" width="19" height="18"><path d="M2 3q3-2 6 0l-1 6q-3-2-6 0z" fill="#e04020"/><path d="M9 3q3 2 6 0l3 0-1 6q-3 2-6 0z" fill="#60b030"/><path d="M1 10q3-2 6 0l-1 6q-3-2-6 0z" fill="#3070e0"/><path d="M8 10q3 2 6 0h3l-1 6q-3 2-6 0z" fill="#f0c020"/></svg>
<div style="left:35px;top:745px;height:18px;line-height:18px;color:#fff;font-weight:bold;font-style:italic;font-size:15px;letter-spacing:.6px;text-shadow:1px 1px 1px #1a4a1a">пуск</div>
<svg style="left:108px;top:744px" width="17" height="17"><path d="M3 13L13 2l2 2L6 15z" fill="#e8a040" stroke="#704000"/><path d="M3 6l9 8" stroke="#e8a040" stroke-width="2"/></svg>
<div style="left:131px;top:743px;height:18px;line-height:18px;font:italic bold 20px/18px 'Liberation Serif',serif;color:#7cc4f5;text-shadow:0 0 1px #0a3a90">e</div>
<svg style="left:154px;top:744px" width="16" height="16"><rect x="1" y="1" width="13" height="13" rx="3" fill="#d8e8f8" stroke="#305090"/><circle cx="8" cy="8" r="4" fill="none" stroke="#2060b0" stroke-width="1.5"/><path d="M8 8l5-4" stroke="#d04020" stroke-width="1.5"/></svg>

<div class="tb" style="left:180px;width:147px;padding-left:31px;background:#1e52b7;box-shadow:inset 1px 1px 1px #163e90">Бухгалтерский уч...</div>
<svg style="left:190px;top:745px" width="18" height="17"><rect x="1" y="2" width="14" height="11" fill="#f0d020"/><path d="M1 9L14 2M2 12L15 6" stroke="#e02020" stroke-width="2.5"/><path d="M3 5l6 4" stroke="#1030a0" stroke-width="2"/></svg>
<div class="tb" style="left:328px;width:145px">Диплом_оплата т...</div>
<svg style="left:337px;top:746px" width="16" height="14"><path d="M1 2h5l2 2h7v9H1z" fill="#f0d070" stroke="#a08030"/></svg>
<div class="tb" style="left:475px;width:145px">Диплом_оплата т...</div>
<svg style="left:484px;top:745px" width="16" height="16"><path d="M5 1h8l2 2v12H5z" fill="#fff" stroke="#555"/><rect x="0" y="3" width="10" height="9" fill="#2040b0"/><text x="1" y="10" font-family="Liberation Sans" font-size="8" font-weight="bold" fill="#fff">W</text></svg>
<div class="tb" style="left:622px;width:147px;padding-left:30px">вырезки из 1 C.do...</div>
<svg style="left:632px;top:745px" width="16" height="16"><path d="M5 1h8l2 2v12H5z" fill="#fff" stroke="#555"/><rect x="0" y="3" width="10" height="9" fill="#2040b0"/><text x="1" y="10" font-family="Liberation Sans" font-size="8" font-weight="bold" fill="#fff">W</text></svg>
<div class="tb" style="left:771px;width:146px">Документ3 - Micro...</div>
<svg style="left:780px;top:745px" width="16" height="16"><path d="M5 1h8l2 2v12H5z" fill="#fff" stroke="#555"/><rect x="0" y="3" width="10" height="9" fill="#2040b0"/><text x="1" y="10" font-family="Liberation Sans" font-size="8" font-weight="bold" fill="#fff">W</text></svg>

<div style="left:931px;top:738px;width:93px;height:30px;background:linear-gradient(#1088e0,#0f9ae8 40%,#1090e0);border-left:1px solid #0a3a90"></div>
<div style="left:923px;top:744px;width:17px;height:17px;border-radius:50%;background:#4a90ea;border:1px solid #c0d8f8"><svg style="left:4px;top:3px" width="7" height="9"><path d="M5 1L2 4.500 5 8" fill="none" stroke="#fff" stroke-width="2"/></svg></div>
<svg style="left:942px;top:744px" width="16" height="16"><path d="M8 0l8 8-8 8-8-8z" fill="#e0c850" stroke="#807020"/><circle cx="8" cy="8" r="3" fill="#a0b0c0" stroke="#404040"/></svg>
<svg style="left:960px;top:745px" width="14" height="15"><path d="M0 0h4v14H0zM4 7l5-7h4L8 7l5 7H9z" fill="#e81020"/><rect x="8" y="9" width="5" height="5" fill="#000"/></svg>
<div style="left:983px;top:747px;height:14px;line-height:14px;color:#fff;font-size:11px;letter-spacing:.3px">14:24</div>
</body></html>
